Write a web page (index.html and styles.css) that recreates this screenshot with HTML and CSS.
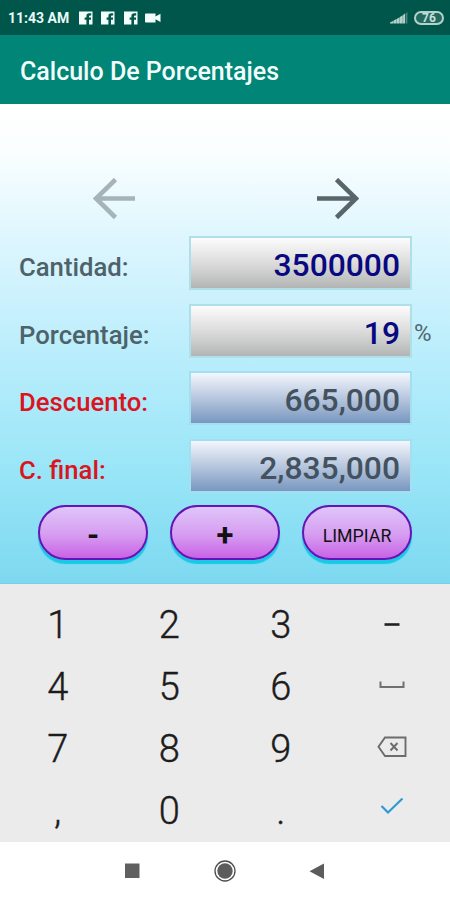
FILE: index.html
```html
<!DOCTYPE html>
<html lang="es">
<head>
    <meta charset="UTF-8">
    <meta name="viewport" content="width=device-width, initial-scale=1.0">
    <title>Calculo De Porcentajes</title>
    <link rel="stylesheet" href="styles.css">
</head>
<body>
    <div class="status-bar">
        <span class="clock">11:43 AM</span>
        <svg class="fb" viewBox="0 0 14 14"><path fill="#f4fffc" d="M0 0.5H13.5V13.5H10V8.8H12V6.6H10V5.4Q10 4.4 11 4.4H12.2V2.2H10.2Q7.4 2.2 7.4 5V6.6H5.6V8.8H7.4V13.5H0Z"/></svg>
        <svg class="fb" viewBox="0 0 14 14"><path fill="#f4fffc" d="M0 0.5H13.5V13.5H10V8.8H12V6.6H10V5.4Q10 4.4 11 4.4H12.2V2.2H10.2Q7.4 2.2 7.4 5V6.6H5.6V8.8H7.4V13.5H0Z"/></svg>
        <svg class="fb" viewBox="0 0 14 14"><path fill="#f4fffc" d="M0 0.5H13.5V13.5H10V8.8H12V6.6H10V5.4Q10 4.4 11 4.4H12.2V2.2H10.2Q7.4 2.2 7.4 5V6.6H5.6V8.8H7.4V13.5H0Z"/></svg>
        <svg class="camera" viewBox="0 0 16 10"><path fill="#f4fffc" d="M1 0.5H10.5V3.5L15.5 0.8V9L10.5 6.3V9.5H1Q0 9.5 0 8.5V1.5Q0 0.5 1 0.5Z"/></svg>
        <svg class="signal" viewBox="0 0 18 12">
            <path fill="#b4d2cb" d="M0 11.5V10.5L3 9V11.5ZM3.3 11.5V8.8L6.4 7V11.5ZM6.7 11.5V6.9L9.6 5.2V11.5ZM9.9 11.5V5L12.8 3.2V11.5ZM13.1 11.5V2.9L15 1.6V11.5Z"/>
            <path fill="#4f857c" d="M15.6 11.5V1.2L17.4 0V11.5Z"/>
        </svg>
        <span class="battery">76</span>
    </div>
    <h1 class="title">Calculo De Porcentajes</h1>

    <div class="content">
        <div class="arrows">
            <svg viewBox="0 0 42 42" class="prev"><path d="M42 20.5H4M22.5 1.5L3 20.5L22.5 39.5"/></svg>
            <svg viewBox="0 0 42 42" class="next"><path d="M0 20.5H38M19.5 1.5L39 20.5L19.5 39.5"/></svg>
        </div>
        <div class="rows">
            <div class="row">
                <span class="label">Cantidad:</span>
                <div class="field">3500000</div>
            </div>
            <div class="row">
                <span class="label">Porcentaje:</span>
                <div class="field">19</div>
                <span class="percent">%</span>
            </div>
            <div class="row">
                <span class="label red">Descuento:</span>
                <div class="field result">665,000</div>
            </div>
            <div class="row">
                <span class="label red">C. final:</span>
                <div class="field result">2,835,000</div>
            </div>
        </div>
        <div class="buttons">
            <button class="sign">-</button>
            <button class="sign">+</button>
            <button>LIMPIAR</button>
        </div>
    </div>

    <div class="keypad">
        <span>1</span>
        <span>2</span>
        <span>3</span>
        <span><svg width="16" height="4" viewBox="0 0 16 4"><path stroke="#222" stroke-width="2.6" d="M0.5 1.5H15.5"/></svg></span>
        <span>4</span>
        <span>5</span>
        <span>6</span>
        <span class="space"><svg width="26" height="8" viewBox="0 0 26 8"><path fill="none" stroke="#707070" stroke-width="2" d="M1.5 0.5V6H24.5V0.5"/></svg></span>
        <span>7</span>
        <span>8</span>
        <span>9</span>
        <span class="space"><svg width="30" height="22" viewBox="0 0 30 22"><path fill="none" stroke="#6c6c6c" stroke-width="1.9" d="M8 1.5H28.5V20H8L1.5 10.8ZM13.5 7L20.5 14.5M20.5 7L13.5 14.5"/></svg></span>
        <span>,</span>
        <span>0</span>
        <span>.</span>
        <span class="ok"><svg width="24" height="18" viewBox="0 0 24 18"><path fill="none" stroke="#2d9bd3" stroke-width="2.2" d="M1.5 9L8 15.5L22.5 1.5"/></svg></span>
    </div>

    <div class="nav-bar">
        <svg width="22" height="22" viewBox="0 0 22 22"><path fill="#606060" d="M4 3.5H18.5V18H4Z"/></svg>
        <svg width="22" height="22" viewBox="0 0 22 22"><circle cx="11" cy="11" r="10" fill="none" stroke="#4c4c4c" stroke-width="1.3"/><circle cx="11" cy="11" r="7.7" fill="#5c5c5c"/></svg>
        <svg width="22" height="22" viewBox="0 0 22 22"><path fill="#5c5c5c" d="M17 3.5V19L2.5 11.2Z"/></svg>
    </div>
</body>
</html>
```
FILE: styles.css
```css
* {
    box-sizing: border-box;
}

body {
    display: flex;
    flex-direction: column;
    height: 900px;
    margin: 0;
    font-family: Roboto, sans-serif;
    background-color: #fff;
    overflow: hidden;
}

.status-bar {
    display: flex;
    align-items: center;
    height: 35px;
    padding: 0 6px 0 8px;
    background-color: #00564a;
    color: #eafaf6;
}

.clock {
    width: 70.5px;
    font-size: 14px;
    font-weight: 700;
    white-space: nowrap;
}

.fb {
    width: 14px;
    height: 14px;
    margin-right: 8.5px;
}

.camera {
    width: 16px;
    height: 10px;
    margin-left: -1px;
}

.signal {
    width: 18px;
    height: 12px;
    margin-left: auto;
}

.battery {
    width: 30px;
    height: 14px;
    margin-left: 6px;
    border: 2px solid #b4d2cb;
    border-radius: 7px;
    font-size: 12px;
    font-weight: 700;
    line-height: 11px;
    text-align: center;
    color: #c4e0da;
    background-color: #24695f;
}

.title {
    height: 69px;
    margin: 0;
    padding-left: 20px;
    font-size: 25px;
    font-weight: 500;
    line-height: 73px;
    color: #f3fffc;
    background-color: #008577;
}

.content {
    height: 480px;
    padding: 74px 0 0 19px;
    background: linear-gradient(#fff, #fafeff 10%, #def6fe 28%, #bdeefc 50%, #9be6f8 75%, #7dd9f0);
    border-bottom: 1px solid #79cfe6;
}

.arrows {
    display: flex;
    gap: 182.5px;
    padding-left: 73.5px;
}

.arrows svg {
    width: 42px;
    height: 42px;
    fill: none;
    stroke-width: 4.6;
}

.prev {
    stroke: #a5b4b9;
}

.next {
    stroke: #596669;
}

.rows {
    display: grid;
    gap: 13.5px;
    margin-top: 16px;
}

.row {
    display: flex;
    align-items: center;
    height: 54px;
}

.label {
    width: 170px;
    padding-top: 8px;
    font-size: 25.7px;
    font-weight: 500;
    color: #4d6269;
}

.red {
    color: #dc1420;
}

.field {
    width: 223px;
    height: 54px;
    padding-right: 10px;
    border: 2px solid #afdfe9;
    font-size: 31.8px;
    font-weight: 500;
    line-height: 54px;
    text-align: right;
    color: #080880;
    background: linear-gradient(#fcfcfc, #dcdcdc 50%, #b3b5b5);
}

.result {
    border-color: #a3dfee;
    color: #43525e;
    background: linear-gradient(#f3f6fd, #b8c7de 50%, #7897c0);
}

.percent {
    padding: 5px 0 0 2px;
    font-size: 24px;
    color: #52686f;
}

.buttons {
    display: flex;
    gap: 22px;
    padding: 12px 0 0 19px;
}

.buttons button {
    width: 110px;
    height: 55px;
    padding: 7px 0 0;
    border: 2px solid #6116b5;
    border-radius: 28px;
    font-family: inherit;
    font-size: 17.8px;
    color: #111;
    background: linear-gradient(#dfc5f9, #d69cf0 55%, #c963e6);
    box-shadow: 0 4px 1px #18c8e6;
}

.buttons .sign {
    font-size: 31px;
    font-weight: 700;
}

.keypad {
    display: grid;
    grid-template-columns: repeat(4, 111.5px);
    grid-auto-rows: 62px;
    height: 258px;
    padding: 10px 0 0 2px;
    font-size: 38px;
    font-weight: 300;
    color: #1c1c1c;
    background-color: #ebebeb;
    -webkit-text-stroke: 0.4px #1c1c1c;
}

.keypad span {
    display: flex;
    align-items: center;
    justify-content: center;
}

.keypad .space {
    padding-bottom: 4px;
}

.keypad .ok {
    padding-bottom: 10px;
}

.nav-bar {
    display: flex;
    justify-content: center;
    gap: 71px;
    height: 58px;
    padding-top: 18px;
    background-color: #fff;
}
```
